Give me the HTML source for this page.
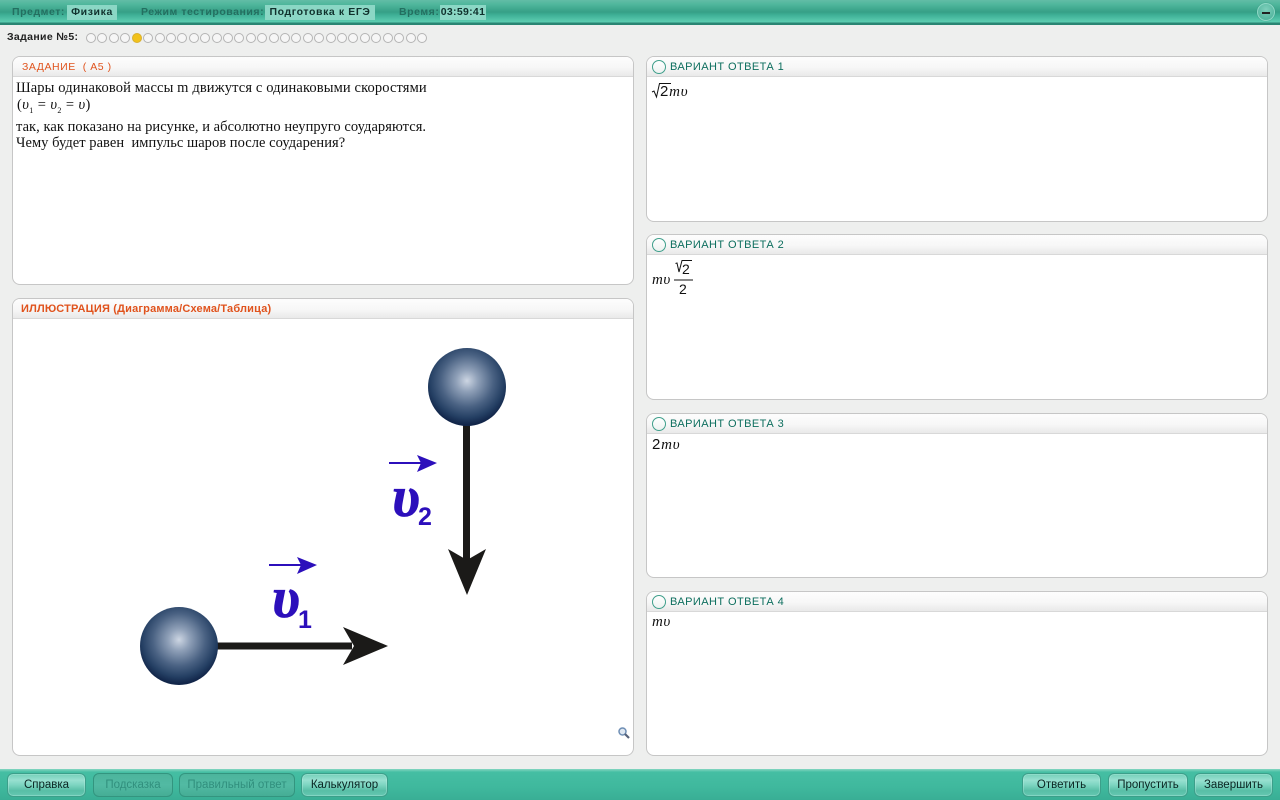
<!DOCTYPE html>
<html><head><meta charset="utf-8"><style>
html,body{margin:0;padding:0}
body{width:1280px;height:800px;overflow:hidden;background:#eeefee;position:relative;font-family:"Liberation Sans",sans-serif}
div{position:absolute;box-sizing:border-box;white-space:nowrap}
.h span,.abs{position:absolute;box-sizing:border-box;white-space:nowrap}
#top{left:0;top:0;width:1280px;height:25px;background:linear-gradient(#62bda6 0,#4fb69c 18%,#369f86 48%,#3fb096 60%,#5ccdb1 88%,#2a8573 92%,#2a8573 100%)}
.tl{top:6px;font-size:10.5px;font-weight:bold;line-height:13px;color:#236f60;letter-spacing:.55px}
.tv{top:5px;height:15px;background:#8bd7c5;font-size:10.5px;font-weight:bold;line-height:15px;color:#10312d;text-align:center;letter-spacing:.6px}
#min{left:1257px;top:3px;width:18px;height:18px;border-radius:50%;background:radial-gradient(circle at 50% 35%,#7fd0bc,#45ad95);border:1px solid #8ed8c6;box-shadow:0 0 1px #2b8070}
#min i{position:absolute;left:4px;top:8px;width:8px;height:2px;background:#222}
#ztitle{left:7px;top:31px;font-size:10.5px;font-weight:bold;color:#222;line-height:13px;letter-spacing:.35px}
.dot{top:33px;width:10px;height:10px;border-radius:50%;border:1px solid #b4b4b4;background:#f6f6f6}
.dot.on{background:#f2c21a;border-color:#d9b030}
.p{left:12px;width:622px;background:#fff;border:1px solid #c6c6c6;border-radius:8px;overflow:hidden}
.r{left:646px}
.h{left:0;top:0;width:100%;height:20px;background:linear-gradient(#fdfdfd,#f7f7f7 55%,#e9e9e9);border-bottom:1px solid #d8d8d8;line-height:20px;font-size:10.5px}
.o{color:#e0531d;left:8px;top:0;line-height:20px;letter-spacing:.3px}
.a{color:#0d6e5e;left:23px;top:0;line-height:20px;font-size:11px;letter-spacing:.42px}
.c{left:5px;top:3px;width:14px;height:14px;border-radius:50%;border:1px solid #3f9f8b;background:linear-gradient(#fff,#eef3f1)}
.t{left:16px;font-family:"Liberation Serif",serif;font-size:14.5px;line-height:16px;color:#111;letter-spacing:.1px}
.f{font-family:"Liberation Serif",serif;font-style:italic;font-size:15px;color:#111;line-height:16px}
.s{font-family:"Liberation Sans",sans-serif;font-style:normal}
#bot{left:0;top:769px;width:1280px;height:31px;background:linear-gradient(#86d6c1 0,#45bea3 10%,#3fb89d 60%,#39ae95 100%)}
.b{top:773px;height:24px;border-radius:6px;border:1px solid #3c9f8a;background:linear-gradient(#74cfb9,#98e0d0 28%,#7dd5c1 50%,#58bea6 76%,#66c8b2);font-size:11.5px;line-height:22px;text-align:center;color:#0a2522;box-shadow:inset 0 0 0 1px rgba(190,240,228,.35)}
.b.d{background:linear-gradient(#4cb49c,#52baa3 50%,#45ad95);color:#318f7d;border-color:#33957f;box-shadow:none}
</style></head><body>
<div id="top"></div>
<div class="tl" style="left:12px">Предмет:</div>
<div class="tv" style="left:67px;width:50px">Физика</div>
<div class="tl" style="left:141px">Режим тестирования:</div>
<div class="tv" style="left:265px;width:110px">Подготовка к ЕГЭ</div>
<div class="tl" style="left:399px">Время:</div>
<div class="tv" style="left:440px;width:46px;letter-spacing:.3px">03:59:41</div>
<div id="min"><i></i></div>

<div id="ztitle">Задание №5:</div>
<div class="dot" style="left:86px"></div><div class="dot" style="left:97.4px"></div><div class="dot" style="left:108.8px"></div><div class="dot" style="left:120.2px"></div><div class="dot on" style="left:131.6px"></div><div class="dot" style="left:143.1px"></div><div class="dot" style="left:154.5px"></div><div class="dot" style="left:165.9px"></div><div class="dot" style="left:177.3px"></div><div class="dot" style="left:188.7px"></div><div class="dot" style="left:200.1px"></div><div class="dot" style="left:211.5px"></div><div class="dot" style="left:222.9px"></div><div class="dot" style="left:234.3px"></div><div class="dot" style="left:245.7px"></div><div class="dot" style="left:257.2px"></div><div class="dot" style="left:268.6px"></div><div class="dot" style="left:280px"></div><div class="dot" style="left:291.4px"></div><div class="dot" style="left:302.8px"></div><div class="dot" style="left:314.2px"></div><div class="dot" style="left:325.6px"></div><div class="dot" style="left:337px"></div><div class="dot" style="left:348.4px"></div><div class="dot" style="left:359.8px"></div><div class="dot" style="left:371.3px"></div><div class="dot" style="left:382.7px"></div><div class="dot" style="left:394.1px"></div><div class="dot" style="left:405.5px"></div><div class="dot" style="left:416.9px"></div>

<div class="p" style="top:56px;height:229px"><div class="h" style="height:20px"><span class="o" style="letter-spacing:.55px;left:9px">ЗАДАНИЕ&nbsp; ( А5 )</span></div></div>
<div class="t" style="top:80px;letter-spacing:.12px">Шары одинаковой массы m движутся с одинаковыми скоростями</div>
<div class="t" style="top:97px;left:17px;letter-spacing:.4px">(<i>υ</i><sub style="font-size:8px;line-height:0">1</sub> = <i>υ</i><sub style="font-size:8px;line-height:0">2</sub> = <i>υ</i>)</div>
<div class="t" style="top:119px;letter-spacing:.05px">так, как показано на рисунке, и абсолютно неупруго соударяются.</div>
<div class="t" style="top:135px;letter-spacing:.04px">Чему будет равен&nbsp; импульс шаров после соударения?</div>

<div class="p" style="top:298px;height:458px"><div class="h"><span class="o" style="font-weight:bold;font-size:11px;letter-spacing:.18px">ИЛЛЮСТРАЦИЯ (Диаграмма/Схема/Таблица)</span></div></div>

<svg style="position:absolute;left:0;top:0" width="1280" height="800" viewBox="0 0 1280 800">
<defs>
<radialGradient id="g" cx=".5" cy=".42" r=".56"><stop offset="0" stop-color="#cdd6e3"/><stop offset=".25" stop-color="#8fa0b8"/><stop offset=".6" stop-color="#4a6283"/><stop offset=".85" stop-color="#243f63"/><stop offset="1" stop-color="#12264a"/></radialGradient>
</defs>
<rect x="463" y="424" width="7" height="136" fill="#1b1a18"/>
<path d="M448 549 L467 560 L486 549 L467 595 Z" fill="#1b1a18"/>
<rect x="216" y="642.500" width="136" height="7" fill="#1b1a18"/>
<path d="M343 627 L354 646 L343 665 L388 646 Z" fill="#1b1a18"/>
<circle cx="467" cy="387" r="39" fill="url(#g)"/>
<circle cx="179" cy="646" r="39" fill="url(#g)"/>
<rect x="389" y="462" width="32" height="2" fill="#2c0fbb"/>
<path d="M417 455 L437 463 L417 472 L421 463 Z" fill="#2c0fbb"/>
<rect x="269" y="564" width="32" height="2" fill="#2c0fbb"/>
<path d="M297 557 L317 565 L297 574 L301 565 Z" fill="#2c0fbb"/>
<text transform="translate(392,516) scale(1.02,1.04)" font-family="Liberation Serif" font-style="italic" font-weight="bold" font-size="56" fill="#2c0fbb" stroke="#2c0fbb" stroke-width=".7">υ</text>
<text x="418" y="525" font-family="Liberation Sans" font-weight="bold" font-size="25" fill="#2c0fbb">2</text>
<text transform="translate(272,617) scale(1.02,1.04)" font-family="Liberation Serif" font-style="italic" font-weight="bold" font-size="56" fill="#2c0fbb" stroke="#2c0fbb" stroke-width=".7">υ</text>
<text x="298" y="628" font-family="Liberation Sans" font-weight="bold" font-size="25" fill="#2c0fbb">1</text>
<circle cx="622.500" cy="731.500" r="3.500" fill="#dfe8f2" stroke="#6f8fb5" stroke-width="1.500"/>
<path d="M625 734 L629 738" stroke="#56627a" stroke-width="2.200"/>
</svg>

<div class="p r" style="top:56px;height:166px"><div class="h"><span class="c"></span><span class="a">ВАРИАНТ ОТВЕТА 1</span></div></div>
<div class="p r" style="top:234px;height:166px"><div class="h"><span class="c"></span><span class="a">ВАРИАНТ ОТВЕТА 2</span></div></div>
<div class="p r" style="top:413px;height:165px"><div class="h"><span class="c"></span><span class="a">ВАРИАНТ ОТВЕТА 3</span></div></div>
<div class="p r" style="top:591px;height:165px"><div class="h"><span class="c"></span><span class="a">ВАРИАНТ ОТВЕТА 4</span></div></div>

<svg style="position:absolute;left:0;top:0" width="1280" height="800" viewBox="0 0 1280 800">
<path d="M652 92 L654 91 L656.500 97 L659.500 83.500 H671" fill="none" stroke="#111" stroke-width="1"/>
<path d="M675.500 263.500 L677 263 L679 272 L682 260.500 H692" fill="none" stroke="#111" stroke-width="1"/>
<rect x="674" y="279.500" width="19" height="1" fill="#111"/>
</svg>
<div class="f" style="left:660px;top:84px;letter-spacing:.8px"><span class="s">2</span><i>mυ</i></div>
<div class="f" style="left:652px;top:272px;letter-spacing:.5px"><i>mυ</i></div>
<div class="f s" style="left:682px;top:261px;font-size:14px">2</div>
<div class="f s" style="left:679px;top:281px;font-size:14px">2</div>
<div class="f" style="left:652px;top:437px;letter-spacing:.8px"><span class="s">2</span><i>mυ</i></div>
<div class="f" style="left:652px;top:614px;letter-spacing:.5px"><i>mυ</i></div>

<div id="bot"></div>
<div class="b" style="left:7px;width:79px">Справка</div>
<div class="b d" style="left:93px;width:80px">Подсказка</div>
<div class="b d" style="left:179px;width:116px">Правильный ответ</div>
<div class="b" style="left:301px;width:87px">Калькулятор</div>
<div class="b" style="left:1022px;width:79px">Ответить</div>
<div class="b" style="left:1108px;width:80px">Пропустить</div>
<div class="b" style="left:1194px;width:79px">Завершить</div>
</body></html>
